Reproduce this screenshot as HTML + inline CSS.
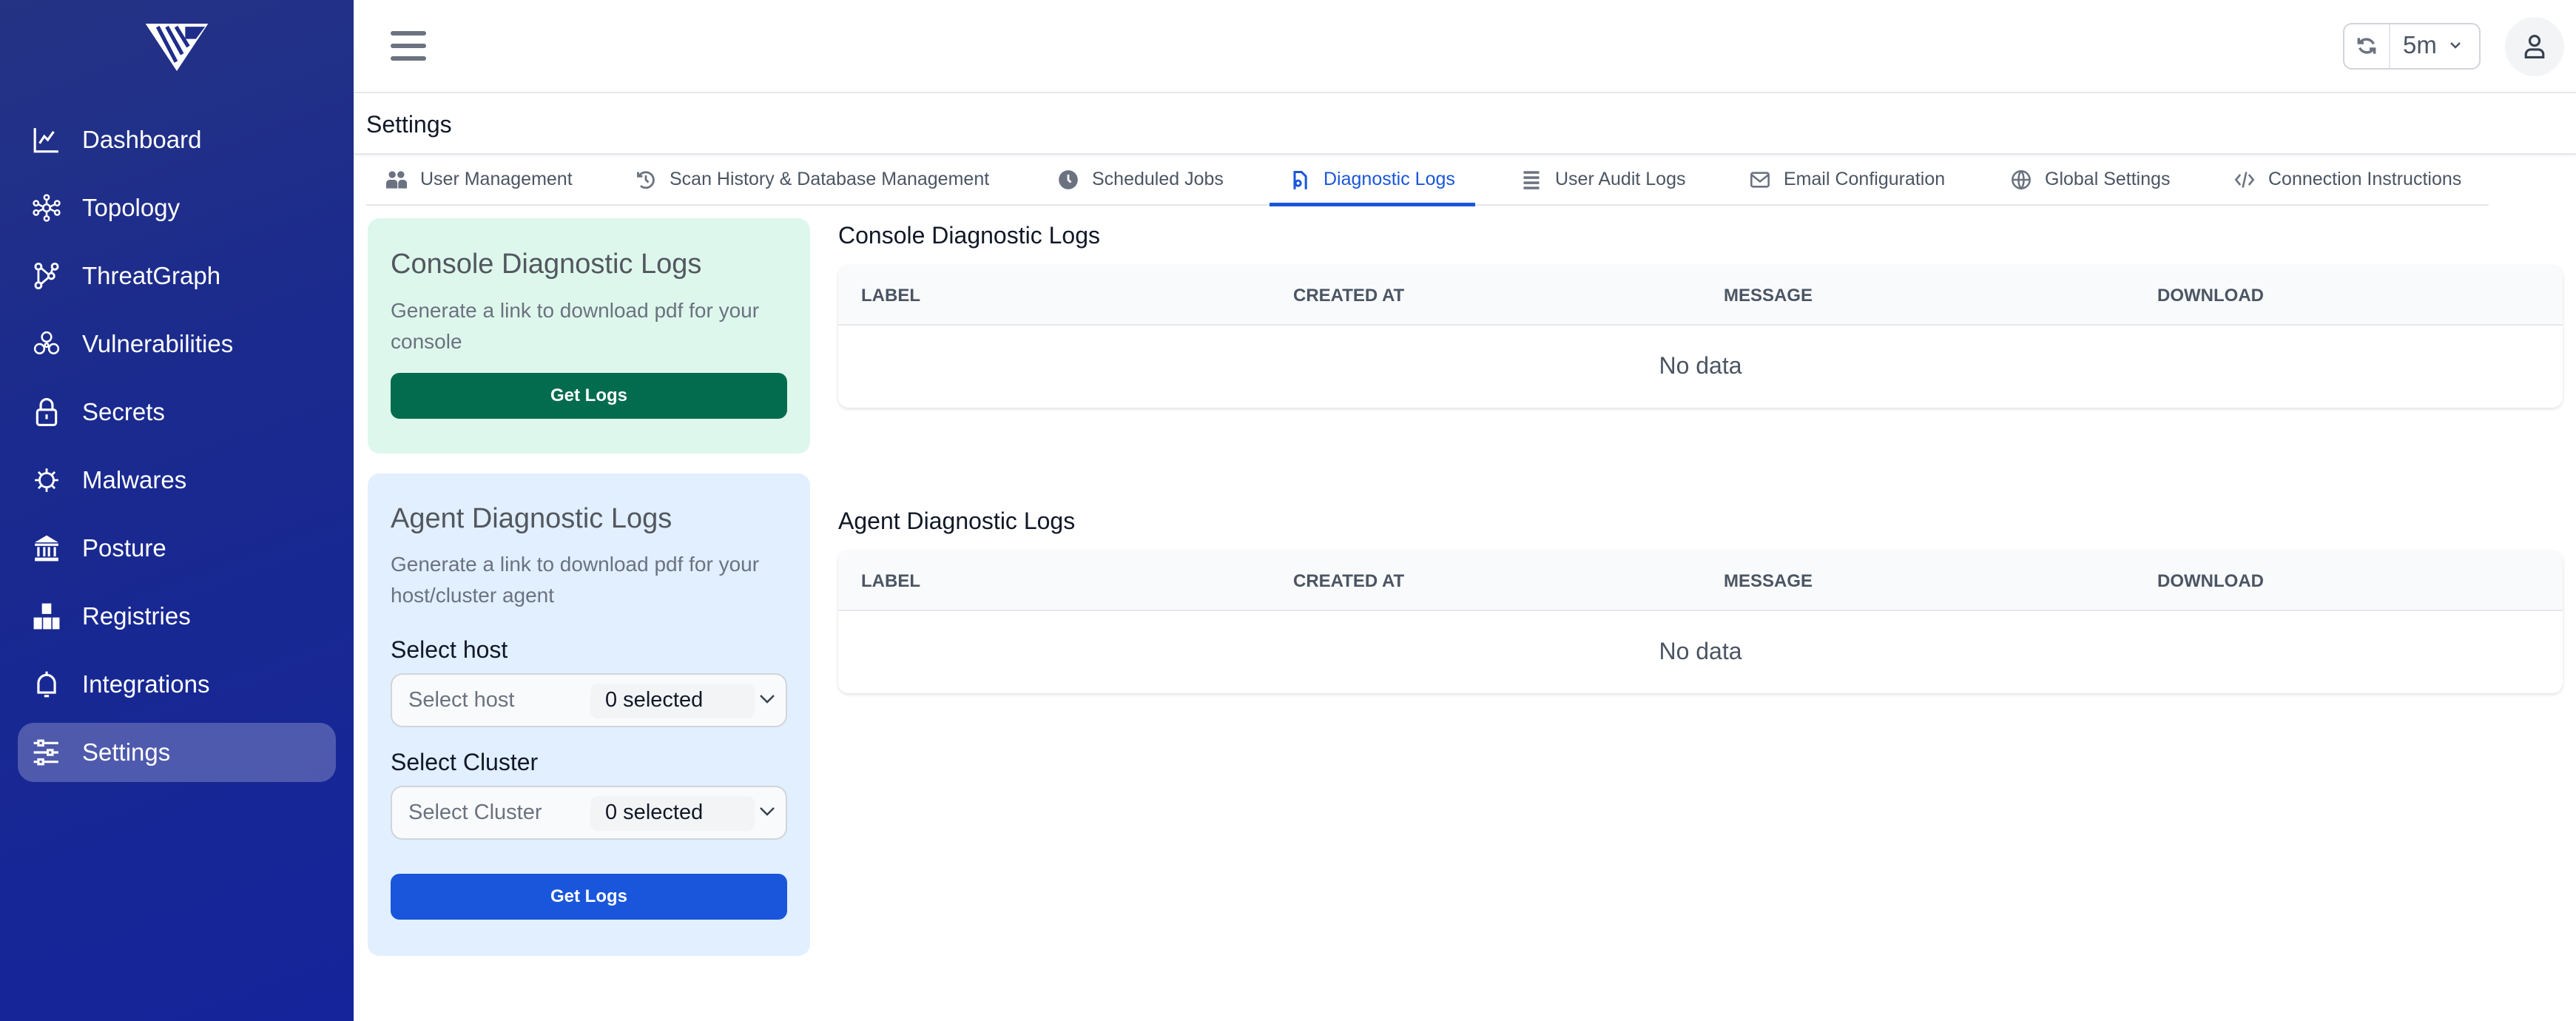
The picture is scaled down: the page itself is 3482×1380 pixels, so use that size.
<!DOCTYPE html>
<html><head><meta charset="utf-8"><style>
*{box-sizing:border-box;margin:0;padding:0}
body{width:3482px;height:1380px;position:relative;overflow:hidden;font-family:"Liberation Sans",sans-serif;background:#fff}
.a{position:absolute}
.side{left:0;top:0;width:478px;height:1380px;background:linear-gradient(160deg,#253384 0%,#1a2a8e 40%,#15249a 100%)}
.nav{position:absolute;left:0;width:478px;height:80px;display:flex;align-items:center;color:#fff;font-size:33px;font-weight:500}
.nav svg{position:absolute;left:44px;width:38px;height:38px}
.nav span{position:absolute;left:111px}
.tab{position:absolute;top:228px;font-size:25px;color:#4b5563;display:flex;align-items:center;white-space:nowrap}
.tab svg{width:28px;height:28px;margin-right:18px}
.card{position:absolute;left:497px;width:598px;border-radius:16px}
.ct{position:absolute;left:31px;font-size:38px;color:#52575f}
.cd{position:absolute;left:31px;font-size:28px;color:#6b7280;line-height:42px;width:540px}
.btn{position:absolute;left:31px;width:536px;height:62px;border-radius:12px;color:#fff;font-size:24px;font-weight:bold;display:flex;align-items:center;justify-content:center}
.lbl{position:absolute;left:31px;font-size:32px;color:#111827;font-weight:500}
.sel{position:absolute;left:31px;width:536px;height:73px;border:2px solid #d1d5db;border-radius:16px;background:#f9fafb}
.sel .p{position:absolute;left:22px;top:18px;font-size:29px;color:#6b7280}
.sel .c{position:absolute;left:268px;top:12px;width:222px;height:47px;background:#f3f4f6;border-radius:10px;font-size:29px;color:#111827;padding:6px 0 0 20px}
.sel svg{position:absolute;right:14px;top:26px}
.h2{position:absolute;left:1133px;font-size:32px;color:#111827}
.tbl{position:absolute;left:1133px;width:2331px;height:193px;border-radius:14px;box-shadow:0 2px 5px rgba(0,0,0,.12);background:#fff;overflow:hidden}
.th{position:absolute;left:0;top:0;width:100%;height:82px;background:#f9fafb;border-bottom:2px solid #e5e7eb}
.th span{position:absolute;top:28px;font-size:24px;font-weight:bold;color:#4b5563}
.nd{position:absolute;left:0;width:100%;top:118px;text-align:center;font-size:32px;color:#4b5563}
</style></head><body>
<div class="a side">
 <svg class="a" style="left:196px;top:32px" width="86" height="64" viewBox="0 0 82 62"><path d="M0 0H82L41 62Z" fill="#fff"/><path d="M16 4L40 50M28 4L48 40M40 4L56 30" stroke="#1f2d8a" stroke-width="5"/><path d="M52 4H78L66 20H52Z" fill="#1f2d8a"/></svg>
 <div class="nav" style="top:149px"><svg viewBox="0 0 24 24" fill="none" stroke="#fff" stroke-width="2"><path d="M2 2V22H22"/><path d="M6 15L10 9L13 12L18 5"/></svg><span>Dashboard</span></div>
 <div class="nav" style="top:241px"><svg viewBox="0 0 24 24" fill="none" stroke="#fff" stroke-width="1.6"><circle cx="12" cy="12" r="3"/><circle cx="12" cy="3" r="2"/><circle cx="12" cy="21" r="2"/><circle cx="3" cy="8" r="2"/><circle cx="21" cy="8" r="2"/><circle cx="3" cy="16" r="2"/><circle cx="21" cy="16" r="2"/><path d="M12 5V9M12 15V19M5 9L9 11M19 9L15 11M5 15L9 13M19 15L15 13"/></svg><span>Topology</span></div>
 <div class="nav" style="top:333px"><svg viewBox="0 0 24 24" fill="none" stroke="#fff" stroke-width="1.8"><circle cx="5" cy="4" r="2.5"/><circle cx="19" cy="4" r="2.5"/><circle cx="5" cy="20" r="2.5"/><circle cx="16" cy="12" r="2.5"/><path d="M7 5L14 11M7 19L14 13M17 6L16 9M5 7V17"/></svg><span>ThreatGraph</span></div>
 <div class="nav" style="top:425px"><svg viewBox="0 0 24 24" fill="none" stroke="#fff" stroke-width="1.6"><circle cx="12" cy="6" r="4"/><circle cx="6" cy="16" r="4"/><circle cx="18" cy="16" r="4"/><circle cx="12" cy="13" r="1.5"/></svg><span>Vulnerabilities</span></div>
 <div class="nav" style="top:517px"><svg viewBox="0 0 24 24" fill="none" stroke="#fff" stroke-width="2"><rect x="4" y="10" width="16" height="13" rx="2"/><path d="M7 10V6A5 5 0 0 1 17 6V10M12 14V18"/></svg><span>Secrets</span></div>
 <div class="nav" style="top:609px"><svg viewBox="0 0 24 24" fill="none" stroke="#fff" stroke-width="1.8"><circle cx="12" cy="12" r="6"/><path d="M12 2V6M12 18V22M2 12H6M18 12H22M5 5L8 8M16 16L19 19M5 19L8 16M16 8L19 5"/></svg><span>Malwares</span></div>
 <div class="nav" style="top:701px"><svg viewBox="0 0 24 24" fill="#fff"><path d="M12 1L22 7H2Z"/><rect x="2" y="8" width="20" height="2"/><rect x="4" y="11" width="2" height="8"/><rect x="9" y="11" width="2" height="8"/><rect x="13" y="11" width="2" height="8"/><rect x="18" y="11" width="2" height="8"/><rect x="2" y="20" width="20" height="3"/></svg><span>Posture</span></div>
 <div class="nav" style="top:793px"><svg viewBox="0 0 24 24" fill="#fff"><rect x="8" y="1" width="8" height="9"/><rect x="1" y="13" width="7" height="10"/><rect x="9" y="13" width="7" height="10"/><rect x="17" y="13" width="6" height="10"/></svg><span>Registries</span></div>
 <div class="nav" style="top:885px"><svg viewBox="0 0 24 24" fill="none" stroke="#fff" stroke-width="2"><path d="M5 19V11A7 7 0 0 1 19 11V19Z M12 1V4M10 22H14"/></svg><span>Integrations</span></div>
 <div class="a" style="left:24px;top:977px;width:430px;height:80px;border-radius:22px;background:rgba(255,255,255,.24)"></div>
 <div class="nav" style="top:977px"><svg viewBox="0 0 24 24" fill="none" stroke="#fff" stroke-width="2"><path d="M1 4H22M1 12H22M1 20H22"/><rect x="5" y="2" width="4" height="4" fill="#5059a8"/><rect x="13" y="10" width="4" height="4" fill="#5059a8"/><rect x="5" y="18" width="4" height="4" fill="#5059a8"/></svg><span>Settings</span></div>
</div>
<div class="a" style="left:478px;top:0;width:3004px;height:126px;border-bottom:2px solid #e5e7eb"></div>
<svg class="a" style="left:528px;top:42px" width="48" height="40"><rect y="0" width="48" height="6" rx="3" fill="#6b7280"/><rect y="17" width="48" height="6" rx="3" fill="#6b7280"/><rect y="34" width="48" height="6" rx="3" fill="#6b7280"/></svg>
<div class="a" style="left:3167px;top:31px;width:186px;height:63px;border:2px solid #d1d5db;border-radius:12px"></div>
<div class="a" style="left:3229px;top:33px;width:2px;height:59px;background:#e5e7eb"></div>
<svg class="a" style="left:3183px;top:46px" width="32" height="32" viewBox="0 0 24 24" fill="none" stroke="#6b7280" stroke-width="2.6"><path d="M4 4V9H9M20 20V15H15"/><path d="M5 9A8 8 0 0 1 19 10M19 15A8 8 0 0 1 5 14"/></svg>
<div class="a" style="left:3248px;top:42px;font-size:33px;color:#4b5563">5m</div>
<svg class="a" style="left:3311px;top:56px" width="16" height="12"><path d="M2 2L8 8L14 2" stroke="#4b5563" stroke-width="2.5" fill="none"/></svg>
<div class="a" style="left:3386px;top:23px;width:80px;height:80px;border-radius:50%;background:#f3f4f6"></div>
<svg class="a" style="left:3410px;top:46px" width="32" height="34" viewBox="0 0 24 26" fill="none" stroke="#374151" stroke-width="2.4"><circle cx="12" cy="7" r="5"/><path d="M3 24V21A5 5 0 0 1 8 16H16A5 5 0 0 1 21 21V24Z"/></svg>
<div class="a" style="left:478px;top:126px;width:3004px;height:83px;border-bottom:2px solid #e5e7eb;box-shadow:0 2px 3px rgba(0,0,0,.05)"></div>
<div class="a" style="left:495px;top:150px;font-size:32px;color:#111827">Settings</div>
<div class="a" style="left:495px;top:276px;width:2869px;height:2px;background:#e5e7eb"></div>
<div class="a" style="left:1716px;top:274px;width:278px;height:5px;background:#1a56db"></div>
<div class="tab" style="left:522px"><svg viewBox="0 0 24 24" fill="#6b7280"><circle cx="7" cy="6" r="4"/><circle cx="17" cy="6" r="4"/><path d="M0 22V16A4 4 0 0 1 4 12H10A4 4 0 0 1 13 16V22ZM14 22V16A4 4 0 0 1 17 12H20A4 4 0 0 1 24 16V22Z"/></svg>User Management</div>
<div class="tab" style="left:859px"><svg viewBox="0 0 24 24" fill="none" stroke="#6b7280" stroke-width="2.4"><path d="M3 3V8H8"/><path d="M4 8A9 9 0 1 1 6 19"/><path d="M12 7V12L15 15"/></svg>Scan History &amp; Database Management</div>
<div class="tab" style="left:1430px"><svg viewBox="0 0 24 24"><circle cx="12" cy="12" r="11" fill="#6b7280"/><path d="M12 6V12L15 15" stroke="#fff" stroke-width="2.4" fill="none"/></svg>Scheduled Jobs</div>
<div class="tab" style="left:1743px;color:#1a56db"><svg viewBox="0 0 24 24" fill="none" stroke="#1a56db" stroke-width="2.6"><path d="M6 23V3H14L19 8V23" /><circle cx="10" cy="16" r="3"/></svg>Diagnostic Logs</div>
<div class="tab" style="left:2056px"><svg viewBox="0 0 24 24" fill="#6b7280"><rect x="3" y="2" width="18" height="3"/><rect x="3" y="8" width="18" height="3"/><rect x="3" y="14" width="18" height="3"/><rect x="3" y="20" width="18" height="3"/></svg>User Audit Logs</div>
<div class="tab" style="left:2365px"><svg viewBox="0 0 24 24" fill="none" stroke="#6b7280" stroke-width="2.2"><rect x="2" y="4" width="20" height="16" rx="2"/><path d="M2 6L12 14L22 6"/></svg>Email Configuration</div>
<div class="tab" style="left:2718px"><svg viewBox="0 0 24 24" fill="none" stroke="#6b7280" stroke-width="2.2"><circle cx="12" cy="12" r="10"/><path d="M2 12H22M12 2C8 6 8 18 12 22C16 18 16 6 12 2"/></svg>Global Settings</div>
<div class="tab" style="left:3020px"><svg viewBox="0 0 24 24" fill="none" stroke="#6b7280" stroke-width="2.2"><path d="M7 6L2 12L7 18M17 6L22 12L17 18M14 3L10 21"/></svg>Connection Instructions</div>

<div class="card" style="top:295px;height:318px;background:#def7ec">
 <div class="ct" style="top:41px">Console Diagnostic Logs</div>
 <div class="cd" style="top:104px">Generate a link to download pdf for your console</div>
 <div class="btn" style="top:209px;background:#046c4e">Get Logs</div>
</div>
<div class="card" style="top:640px;height:652px;background:#e1effe">
 <div class="ct" style="top:40px">Agent Diagnostic Logs</div>
 <div class="cd" style="top:102px">Generate a link to download pdf for your host/cluster agent</div>
 <div class="lbl" style="top:220px">Select host</div>
 <div class="sel" style="top:270px"><div class="p">Select host</div><div class="c">0 selected</div><svg width="22" height="14"><path d="M2 2L11 11L20 2" stroke="#374151" stroke-width="2.5" fill="none"/></svg></div>
 <div class="lbl" style="top:372px">Select Cluster</div>
 <div class="sel" style="top:422px"><div class="p">Select Cluster</div><div class="c">0 selected</div><svg width="22" height="14"><path d="M2 2L11 11L20 2" stroke="#374151" stroke-width="2.5" fill="none"/></svg></div>
 <div class="btn" style="top:541px;background:#1a56db">Get Logs</div>
</div>

<div class="h2" style="top:300px">Console Diagnostic Logs</div>
<div class="tbl" style="top:358px"><div class="th"><span style="left:31px">LABEL</span><span style="left:615px">CREATED AT</span><span style="left:1197px">MESSAGE</span><span style="left:1783px">DOWNLOAD</span></div><div class="nd">No data</div></div>
<div class="h2" style="top:686px">Agent Diagnostic Logs</div>
<div class="tbl" style="top:744px"><div class="th"><span style="left:31px">LABEL</span><span style="left:615px">CREATED AT</span><span style="left:1197px">MESSAGE</span><span style="left:1783px">DOWNLOAD</span></div><div class="nd">No data</div></div>
</body></html>
